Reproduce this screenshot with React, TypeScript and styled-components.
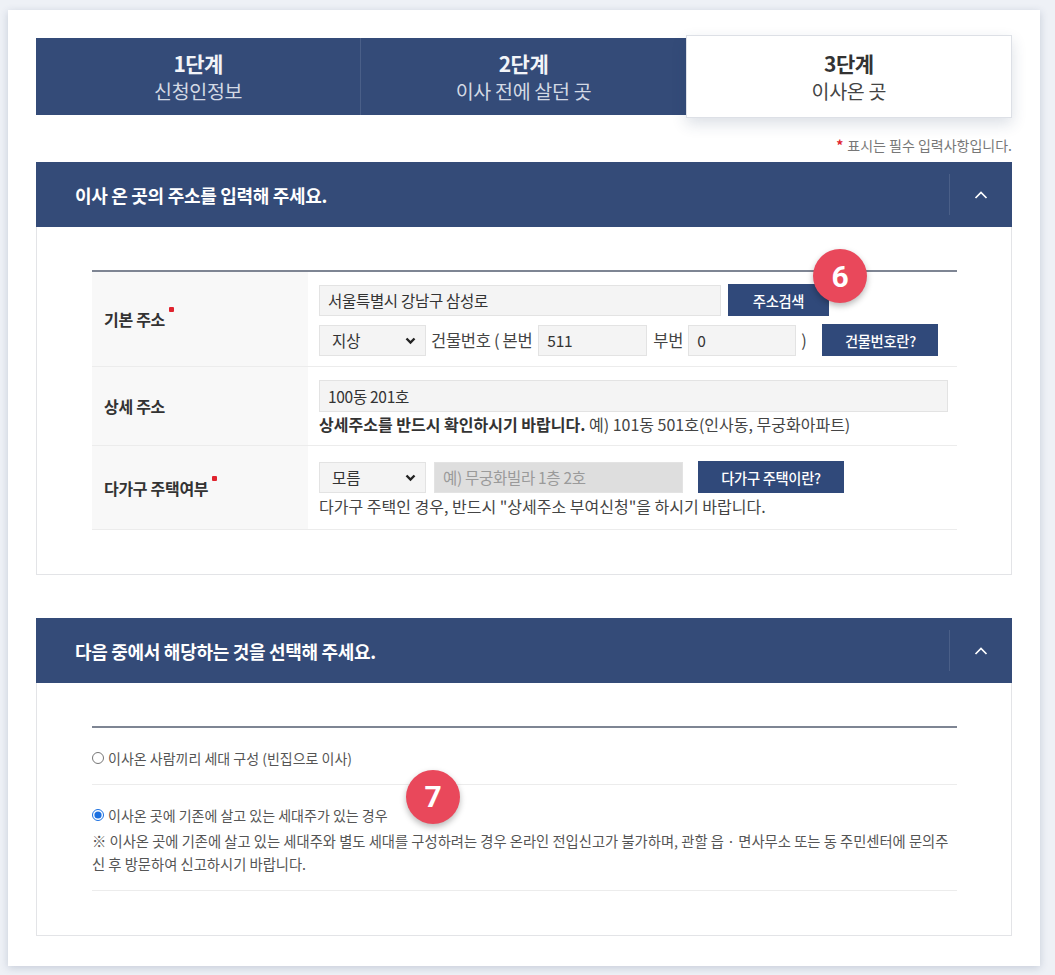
import React from "react";
import styled, { createGlobalStyle } from "styled-components";

const NAVY = "#344b78";

const GlobalStyle = createGlobalStyle`
  * { box-sizing: border-box; }
  body {
    margin: 0;
    background: #eef1f6;
    font-family: "Noto Sans CJK KR", "Noto Sans", sans-serif;
    color: #333;
  }
`;

const Page = styled.div`
  padding: 10px 15px 12px 8px;
`;

const Card = styled.div`
  background: #fff;
  box-shadow: 0 2px 8px rgba(40, 60, 100, 0.2);
  padding: 25px 28px 30px 28px;
`;

const StepBar = styled.div`
  display: flex;
  align-items: center;
  height: 83px;
`;

const Step = styled.div<{ $active?: boolean }>`
  flex: 1;
  height: ${(p) => (p.$active ? "83px" : "77px")};
  display: flex;
  flex-direction: column;
  align-items: center;
  justify-content: center;
  background: ${(p) => (p.$active ? "#fff" : NAVY)};
  border: ${(p) => (p.$active ? "1px solid #dde0e6" : "none")};
  border-left: ${(p) => (p.$active ? "1px solid #dde0e6" : "1px solid #4a5f88")};
  box-shadow: ${(p) => (p.$active ? "0 6px 14px rgba(40, 60, 100, 0.16)" : "none")};
  &:first-child { border-left: none; }
`;

const StepTitle = styled.div<{ $active?: boolean }>`
  font-size: 21px;
  font-weight: 700;
  line-height: 27px;
  letter-spacing: -0.5px;
  color: ${(p) => (p.$active ? "#333" : "#f2f4f8")};
`;

const StepSub = styled.div<{ $active?: boolean }>`
  font-size: 19.5px;
  line-height: 27px;
  letter-spacing: -0.3px;
  color: ${(p) => (p.$active ? "#444" : "#d3d9e4")};
`;

const RequiredNote = styled.div`
  margin-top: 18px;
  text-align: right;
  font-size: 14px;
  line-height: 18px;
  color: #777;
`;

const Star = styled.span`
  color: #e0242f;
  font-weight: 700;
  margin-right: 4px;
`;

const Section = styled.section<{ $gap?: number }>`
  margin-top: ${(p) => p.$gap ?? 0}px;
`;

const SectionHeader = styled.div`
  height: 65px;
  background: ${NAVY};
  display: flex;
  align-items: center;
  padding-left: 39px;
`;

const SectionTitle = styled.h2`
  flex: 1;
  margin: 0;
  font-size: 18px;
  font-weight: 700;
  color: #fff;
  letter-spacing: -0.3px;
`;

const Toggle = styled.button`
  width: 63px;
  height: 41px;
  border: none;
  border-left: 1px solid #4a5f88;
  background: transparent;
  display: flex;
  align-items: center;
  justify-content: center;
  padding: 0;
`;

const SectionBody = styled.div`
  border: 1px solid #e3e4e7;
  border-top: none;
  padding: 43px 54px 44px 55px;
`;

const FormTable = styled.div`
  border-top: 2px solid #7e8593;
`;

const Row = styled.div<{ $minHeight: number }>`
  display: grid;
  grid-template-columns: 216px 1fr;
  min-height: ${(p) => p.$minHeight}px;
  border-bottom: 1px solid #ececec;
`;

const Label = styled.div`
  background: #f8f8f8;
  display: flex;
  align-items: center;
  padding-left: 12px;
`;

const LabelText = styled.span`
  font-size: 16px;
  font-weight: 700;
  color: #333;
  letter-spacing: -0.3px;
`;

const Mark = styled.span`
  display: inline-block;
  width: 5px;
  height: 5px;
  border-radius: 1px;
  background: #e0242f;
  margin-left: 4px;
  vertical-align: 0.85em;
`;

const Content = styled.div<{ $gap: number }>`
  display: flex;
  flex-direction: column;
  justify-content: center;
  gap: ${(p) => p.$gap}px;
  padding: 12px 0 10px 11px;
`;

const Line = styled.div`
  display: flex;
  align-items: center;
  font-size: 16.5px;
  color: #444;
  letter-spacing: -0.3px;
`;

const TextInput = styled.input<{ $w: number; $h?: number; $disabled?: boolean }>`
  width: ${(p) => p.$w}px;
  height: ${(p) => p.$h ?? 31}px;
  border: 1px solid #e3e3e3;
  background: ${(p) => (p.$disabled ? "#dedede" : "#f4f4f4")};
  padding: 0 8px;
  font-family: inherit;
  font-size: 15.5px;
  letter-spacing: -0.3px;
  color: #333;
  outline: none;
  &::placeholder { color: #9a9a9a; }
`;

const SelectWrap = styled.span`
  position: relative;
  display: inline-block;
`;

const Select = styled.select`
  appearance: none;
  width: 107px;
  height: 31px;
  border: 1px solid #e3e3e3;
  background: #f4f4f4;
  padding: 0 12px;
  font-family: inherit;
  font-size: 15.5px;
  color: #333;
  outline: none;
`;

const SelectArrow = styled.svg`
  position: absolute;
  right: 10px;
  top: 12px;
  pointer-events: none;
`;

const Button = styled.button<{ $w: number }>`
  width: ${(p) => p.$w}px;
  height: 32px;
  padding: 0;
  border: none;
  background: #30497a;
  color: #fff;
  font-family: inherit;
  font-size: 14.3px;
  font-weight: 500;
  letter-spacing: -0.3px;
  white-space: nowrap;
`;

const Text = styled.span<{ $ml?: number; $mr?: number }>`
  margin-left: ${(p) => p.$ml ?? 0}px;
  margin-right: ${(p) => p.$mr ?? 0}px;
  white-space: nowrap;
`;

const Help = styled.div`
  font-size: 16px;
  line-height: 20px;
  color: #444;
  white-space: nowrap;
  b { font-weight: 700; color: #333; }
`;

const Anchor = styled.span`
  position: relative;
  display: inline-flex;
`;

const Badge = styled.span<{ $left: number; $top: number }>`
  position: absolute;
  left: ${(p) => p.$left}px;
  top: ${(p) => p.$top}px;
  width: 54px;
  height: 54px;
  border-radius: 50%;
  background: #e9485b;
  color: #fff;
  font-family: "Roboto", "Noto Sans", sans-serif;
  font-size: 30px;
  font-weight: 700;
  letter-spacing: 0;
  display: flex;
  align-items: center;
  justify-content: center;
  box-shadow: 0 3px 6px rgba(0, 0, 0, 0.28);
  z-index: 2;
`;

const OptionList = styled.div`
  border-top: 2px solid #7e8593;
`;

const Option = styled.div`
  padding: 17px 0 15px;
  border-bottom: 1px solid #ececec;
`;

const RadioLabel = styled.label`
  position: relative;
  display: inline-flex;
  align-items: center;
  height: 20px;
  font-size: 14px;
  line-height: 20px;
  color: #555;
  input {
    width: 12px;
    height: 12px;
    margin: 0 4px 0 0;
    accent-color: #1a6fe0;
  }
`;

const Note = styled.p`
  margin: 3px 0 0;
  font-size: 14.3px;
  line-height: 23px;
  color: #555;
  span { display: block; height: 23px; white-space: nowrap; }
`;

const Chevron = () => (
  <svg width="14" height="8" viewBox="0 0 14 8">
    <polyline points="1.5,7 7,1.5 12.5,7" fill="none" stroke="#fff" strokeWidth="1.7" />
  </svg>
);

const Arrow = () => (
  <SelectArrow width="11" height="8" viewBox="0 0 11 8">
    <polyline points="1.5,1.5 5.5,5.5 9.5,1.5" fill="none" stroke="#222" strokeWidth="2.4" />
  </SelectArrow>
);

const steps = [
  { title: "1단계", sub: "신청인정보" },
  { title: "2단계", sub: "이사 전에 살던 곳" },
  { title: "3단계", sub: "이사온 곳" },
];

export default function App() {
  return (
    <Page>
      <GlobalStyle />
      <Card>
        <StepBar>
          {steps.map((s, i) => {
            const active = i === steps.length - 1;
            return (
              <Step key={s.title} $active={active}>
                <StepTitle $active={active}>{s.title}</StepTitle>
                <StepSub $active={active}>{s.sub}</StepSub>
              </Step>
            );
          })}
        </StepBar>

        <RequiredNote>
          <Star>*</Star>표시는 필수 입력사항입니다.
        </RequiredNote>

        <Section $gap={8}>
          <SectionHeader>
            <SectionTitle>이사 온 곳의 주소를 입력해 주세요.</SectionTitle>
            <Toggle aria-label="접기">
              <Chevron />
            </Toggle>
          </SectionHeader>
          <SectionBody>
            <FormTable>
              <Row $minHeight={93}>
                <Label>
                  <LabelText>
                    기본 주소<Mark />
                  </LabelText>
                </Label>
                <Content $gap={8}>
                  <Line>
                    <TextInput $w={402} defaultValue="서울특별시 강남구 삼성로" />
                    <Anchor>
                      <Button $w={101} style={{ marginLeft: 7 }}>주소검색</Button>
                      <Badge $left={92} $top={-35}>6</Badge>
                    </Anchor>
                  </Line>
                  <Line>
                    <SelectWrap>
                      <Select defaultValue="지상">
                        <option>지상</option>
                        <option>지하</option>
                      </Select>
                      <Arrow />
                    </SelectWrap>
                    <Text $ml={5} $mr={6}>건물번호 ( 본번</Text>
                    <TextInput $w={109} defaultValue="511" />
                    <Text $ml={6} $mr={5}>부번</Text>
                    <TextInput $w={108} defaultValue="0" />
                    <Text $ml={5} $mr={16}>)</Text>
                    <Button $w={116}>건물번호란?</Button>
                  </Line>
                </Content>
              </Row>

              <Row $minHeight={79}>
                <Label>
                  <LabelText>상세 주소</LabelText>
                </Label>
                <Content $gap={2}>
                  <TextInput $w={629} $h={32} defaultValue="100동 201호" />
                  <Help>
                    <b>상세주소를 반드시 확인하시기 바랍니다.</b> 예) 101동 501호(인사동, 무궁화아파트)
                  </Help>
                </Content>
              </Row>

              <Row $minHeight={84}>
                <Label>
                  <LabelText>
                    다가구 주택여부<Mark />
                  </LabelText>
                </Label>
                <Content $gap={3}>
                  <Line>
                    <SelectWrap>
                      <Select defaultValue="모름">
                        <option>모름</option>
                        <option>예</option>
                        <option>아니오</option>
                      </Select>
                      <Arrow />
                    </SelectWrap>
                    <TextInput
                      $w={249}
                      $disabled
                      disabled
                      placeholder="예) 무궁화빌라 1층 2호"
                      style={{ marginLeft: 8, marginRight: 15 }}
                    />
                    <Button $w={146}>다가구 주택이란?</Button>
                  </Line>
                  <Help>다가구 주택인 경우, 반드시 "상세주소 부여신청"을 하시기 바랍니다.</Help>
                </Content>
              </Row>
            </FormTable>
          </SectionBody>
        </Section>

        <Section $gap={43}>
          <SectionHeader>
            <SectionTitle>다음 중에서 해당하는 것을 선택해 주세요.</SectionTitle>
            <Toggle aria-label="접기">
              <Chevron />
            </Toggle>
          </SectionHeader>
          <SectionBody>
            <OptionList>
              <Option>
                <RadioLabel>
                  <input type="radio" name="household" />
                  이사온 사람끼리 세대 구성 (빈집으로 이사)
                </RadioLabel>
              </Option>
              <Option>
                <RadioLabel>
                  <input type="radio" name="household" defaultChecked />
                  이사온 곳에 기존에 살고 있는 세대주가 있는 경우
                  <Badge $left={314} $top={-35}>7</Badge>
                </RadioLabel>
                <Note>
                  <span>
                    ※ 이사온 곳에 기존에 살고 있는 세대주와 별도 세대를 구성하려는 경우 온라인 전입신고가 불가하며, 관할 읍 · 면사무소 또는 동 주민센터에 문의주
                  </span>
                  <span>신 후 방문하여 신고하시기 바랍니다.</span>
                </Note>
              </Option>
            </OptionList>
          </SectionBody>
        </Section>
      </Card>
    </Page>
  );
}
